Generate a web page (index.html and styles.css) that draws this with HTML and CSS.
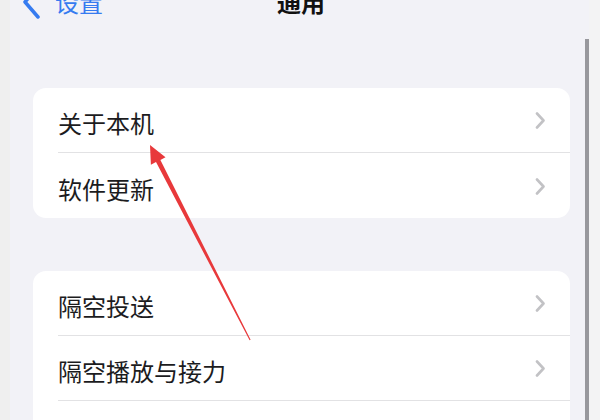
FILE: index.html
```html
<!DOCTYPE html>
<html lang="zh-CN">
<head>
  <meta charset="UTF-8" />
  <meta name="viewport" content="width=device-width, initial-scale=1.0"/>
  <title>通用</title>
  <link rel="stylesheet" href="styles.css">
</head>
<body>
  <div class="frame">
    <div class="edge"></div>

    <main class="screen">
      <nav class="navbar">
        <a class="back" href="#">
          <svg width="18" height="34" viewBox="0 0 18 34"><path d="M15 2 L2 17 L15 32" fill="none" stroke="#367bf0" stroke-width="3.5" stroke-linecap="round" stroke-linejoin="round"/></svg>
          <span>设置</span>
        </a>
        <h1 class="title">通用</h1>
        <span></span>
      </nav>

      <section class="group">
        <div class="row"><div class="row-body"><span>关于本机</span><svg class="chev" width="11" height="17" viewBox="0 0 11 17"><path d="M2 1.5 L8.5 8.5 L2 15.5" /></svg></div></div>
        <div class="row"><div class="row-body"><span>软件更新</span><svg class="chev" width="11" height="17" viewBox="0 0 11 17"><path d="M2 1.5 L8.5 8.5 L2 15.5" /></svg></div></div>
      </section>

      <section class="group">
        <div class="row"><div class="row-body"><span>隔空投送</span><svg class="chev" width="11" height="17" viewBox="0 0 11 17"><path d="M2 1.5 L8.5 8.5 L2 15.5" /></svg></div></div>
        <div class="row"><div class="row-body"><span>隔空播放与接力</span><svg class="chev" width="11" height="17" viewBox="0 0 11 17"><path d="M2 1.5 L8.5 8.5 L2 15.5" /></svg></div></div>
        <div class="row"><div class="row-body"><span>画中画</span><svg class="chev" width="11" height="17" viewBox="0 0 11 17"><path d="M2 1.5 L8.5 8.5 L2 15.5" /></svg></div></div>
      </section>
    </main>

    <div class="scrollbar"></div>
    <div class="edge edge-right"></div>
  </div>

  <!-- red annotation arrow pointing at 关于本机 -->
  <svg class="arrow" width="600" height="420" viewBox="0 0 600 420">
    <polygon points="150,145 165.5,157.2 160.4,159.9 250.6,339.8 249.6,340.3 156,162.1 150.9,164.8" fill="#e8393b"/>
  </svg>
</body>
</html>
```

FILE: styles.css
```css
* { box-sizing: border-box; margin: 0; padding: 0; }
body { font-family: "Noto Sans CJK SC", "Noto Sans", sans-serif; background: #f2f2f7; color: #1c1c1e; width: 600px; height: 420px; overflow: hidden; position: relative; }
.frame { display: flex; height: 420px; overflow: hidden; }
.edge { width: 10px; background: #efefef; flex-shrink: 0; }
.edge-right { width: 11px; background: #f3f3f4; }
.screen { flex: 1; padding: 0 15px 0 23px; background: #f2f2f7; }
.scrollbar { width: 4px; margin-top: 39px; background: #98989d; flex-shrink: 0; }

.navbar { display: grid; grid-template-columns: 1fr auto 1fr; align-items: center; height: 34px; margin: -16px -15px 0 -23px; padding: 0 6px 0 13px; }
.back { display: flex; align-items: center; gap: 14px; color: #367bf0; text-decoration: none; font-size: 24px; }
.back svg { display: block; }
.title { font-size: 24px; font-weight: 700; color: #111; }

.group { background: #fff; border-radius: 13px; margin-top: 70px; overflow: hidden; }
.group + .group { margin-top: 53px; }
.row { padding-left: 25px; }
.row-body { display: flex; align-items: center; justify-content: space-between; height: 65px; padding: 5px 24px 0 0; border-bottom: 1px solid #e2e2e4; font-size: 24px; }
.row:last-child .row-body { border-bottom: none; }
.chev { display: block; margin-top: -4px; }
.chev path { fill: none; stroke: #c2c2c5; stroke-width: 2.6; stroke-linecap: round; stroke-linejoin: round; }

.arrow { position: absolute; left: 0; top: 0; pointer-events: none; }
```
